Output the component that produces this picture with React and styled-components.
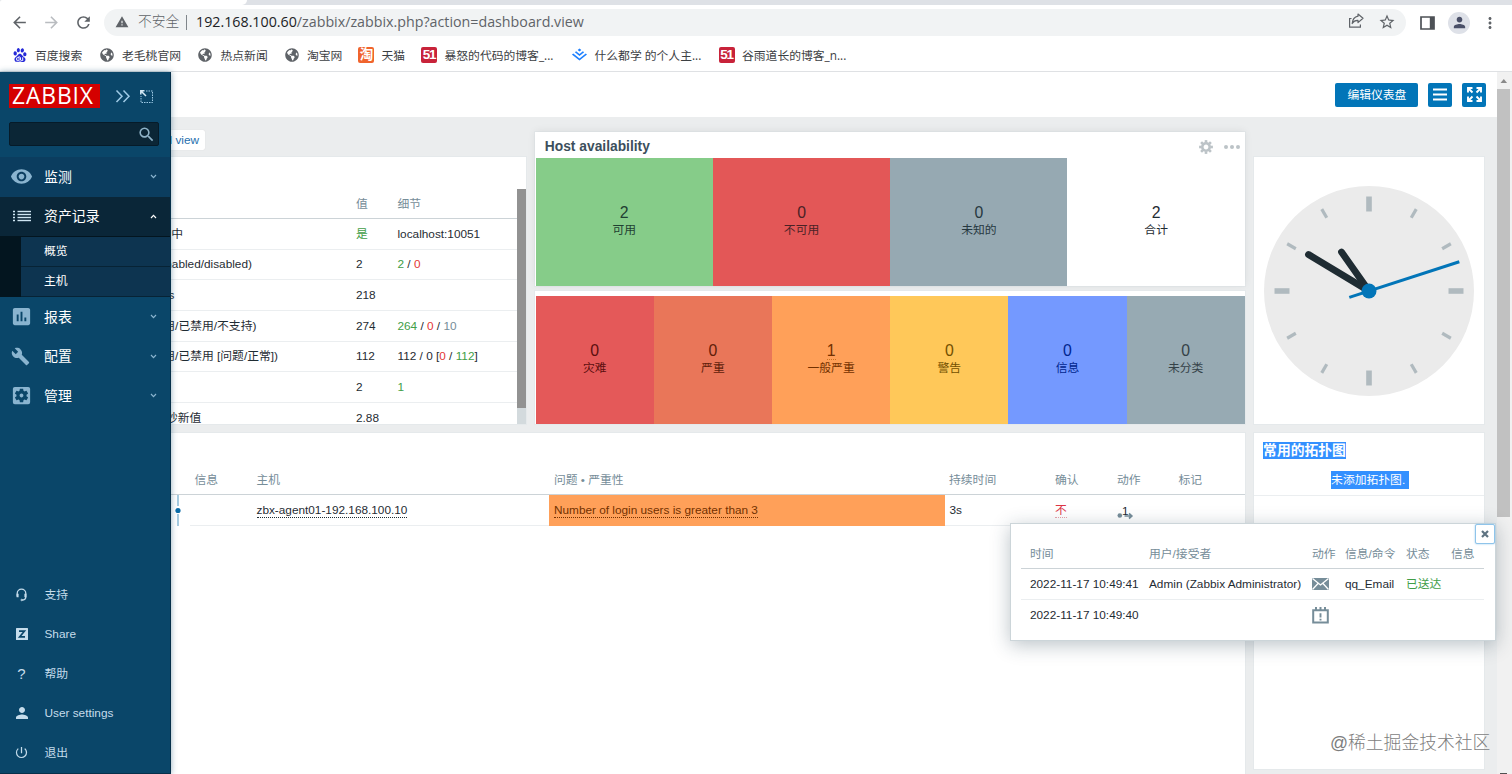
import React from "react";
import styled, { createGlobalStyle } from "styled-components";
import {
  MdArrowBack,
  MdArrowForward,
  MdRefresh,
  MdWarning,
  MdStarBorder,
  MdPerson,
  MdMoreVert,
  MdSearch,
  MdRemoveRedEye,
  MdAssessment,
  MdBuild,
  MdSettingsApplications,
  MdPowerSettingsNew,
} from "react-icons/md";
import { FaGlobeAmericas } from "react-icons/fa";
import { SiBaidu, SiJuejin } from "react-icons/si";

const GlobalStyle = createGlobalStyle`
  * {
    box-sizing: border-box;
  }

  body {
    margin: 0;
    overflow: hidden;
    font-family: "Liberation Sans", "Noto Sans CJK SC", sans-serif;
    font-size: 11.8px;
    line-height: 16px;
    color: #1f2c33;
  }

  svg {
    display: block;
    flex-shrink: 0;
  }
`;

const Screen = styled.div`
  position: relative;
  width: 1512px;
  height: 774px;
  display: flex;
  flex-direction: column;
  overflow: hidden;
  background: #fff;
`;

/* browser */

const TabStrip = styled.div`
  height: 5px;
  background: #dee1e6;
  flex-shrink: 0;
`;

const ActiveTab = styled.div`
  width: 247px;
  height: 5px;
  background: #fff;
  border-radius: 2px 0 5px 0;
`;

const Toolbar = styled.div`
  height: 35px;
  flex-shrink: 0;
  display: flex;
  align-items: center;
  padding: 0 12px 0 10px;
  color: #5f6368;
`;

const NavButtons = styled.div`
  display: flex;
  align-items: center;
  gap: 13px;
  width: 94px;
  padding-bottom: 1px;
`;

const Omnibox = styled.div`
  width: 1302px;
  height: 27px;
  border-radius: 14px;
  background: #f1f3f4;
  display: flex;
  align-items: center;
  padding: 0 10px 1px 11px;
`;

const Insecure = styled.span`
  margin-left: 9px;
  width: 48px;
  font-size: 13.8px;
  font-weight: 300;
  line-height: 20px;
  white-space: nowrap;
`;

const Divider = styled.span`
  width: 1px;
  height: 15px;
  background: #80868b;
  margin-right: 9px;
`;

const Url = styled.span`
  flex: 1;
  font-family: "Open Sans", "Noto Sans", sans-serif;
  font-size: 14.25px;
  line-height: 20px;
  white-space: nowrap;

  b {
    font-weight: 400;
    color: #202124;
  }
`;

const OmniActions = styled.div`
  display: flex;
  gap: 14px;
`;

const BrowserActions = styled.div`
  margin-left: 14px;
  display: flex;
  align-items: center;
`;

const Avatar = styled.div`
  width: 22px;
  height: 22px;
  margin: 0 11px 0 13px;
  border-radius: 50%;
  background: #dee1e8;
  color: #4a5068;
  display: flex;
  align-items: center;
  justify-content: center;
`;

const Bookmarks = styled.div`
  height: 32px;
  flex-shrink: 0;
  border-bottom: 1px solid #dfe1e4;
  display: flex;
  align-items: center;
  padding: 0 0 2px 11px;
`;

const Bookmark = styled.div`
  width: ${(p) => p.$width}px;
  display: flex;
  align-items: center;
  gap: 7px;
  font-family: "Open Sans", "Noto Sans CJK SC", sans-serif;
  font-size: 11.8px;
  white-space: nowrap;
  color: #3c4043;
`;

const BookmarkIcon = styled.div`
  width: 17px;
  height: 17px;
  display: flex;
  align-items: center;
  justify-content: center;
  color: ${(p) => p.$color};
`;

const TextBadge = styled.span`
  width: 16px;
  height: 16px;
  border-radius: 2px;
  background: ${(p) => p.$bg};
  color: #fff;
  font-family: "Liberation Sans", "Noto Sans CJK SC", sans-serif;
  font-size: 13.5px;
  font-weight: 700;
  line-height: 16px;
  letter-spacing: -1.2px;
  text-align: center;
`;

/* page frame */

const Page = styled.div`
  flex: 1;
  min-height: 0;
  display: flex;
`;

const Sidebar = styled.aside`
  position: relative;
  z-index: 2;
  width: 171px;
  /* expanded over the compact rail, so the content starts under it */
  margin-right: -121px;
  flex-shrink: 0;
  display: flex;
  flex-direction: column;
  background: #0a4669;
  border-right: 1px solid #07304a;
  box-shadow: 0 0 6px rgba(10, 70, 105, 0.45);
  color: #fff;
`;

const SidebarHead = styled.div`
  display: flex;
  align-items: center;
  height: 24px;
  margin: 12px 0 14px 9px;
  color: #9fcae6;
`;

const Logo = styled.div`
  width: 91px;
  height: 24px;
  padding-left: 3px;
  background: #d40000;
  color: #fff;
  font-family: "Open Sans", sans-serif;
  font-size: 22.8px;
  line-height: 24px;
  letter-spacing: 0.9px;
  white-space: nowrap;
`;

const SearchBox = styled.div`
  width: 150px;
  height: 24px;
  margin: 0 0 11px 9px;
  border-radius: 2px;
  background: #0b2636;
  border: 1px solid #061b29;
  display: flex;
  align-items: center;
  justify-content: flex-end;
  padding-right: 2px;
  color: #8fb3c8;
`;

const MenuItem = styled.div`
  height: 39.5px;
  display: flex;
  align-items: center;
  padding: 0 13px 0 10px;
  background: ${(p) => p.$bg || "transparent"};
  color: #8ab4cf;
`;

const MenuIcon = styled.span`
  width: 34px;
  display: flex;
  color: ${(p) => (p.$active ? "#cfe6f3" : "inherit")};

  svg {
    margin-left: ${(p) => p.$shift || 0}px;
  }
`;

const MenuLabel = styled.span`
  flex: 1;
  font-size: 13.9px;
  line-height: 20px;
  color: #fff;
`;

const SubMenu = styled.div`
  height: 61px;
  padding: 1px 0 0 21px;
  background: #03151f;
`;

const SubItem = styled.div`
  height: 30px;
  padding: 6px 0 0 23px;
  background: #0d3450;
  border-bottom: 1px solid #072335;
`;

const FootMenu = styled.div`
  margin-top: auto;
  padding-bottom: 1px;
  border-bottom: 1px solid #07304a;
`;

const FootItem = styled.div`
  height: 39.5px;
  display: flex;
  align-items: center;
  padding: 1px 0 0 14.5px;
  gap: 16px;
  color: #c5dceb;
  line-height: 20px;
`;

const FootIcon = styled.span`
  width: 14px;
  display: flex;
  justify-content: center;
  font-size: 15px;
`;

const Main = styled.main`
  flex: 1;
  min-width: 0;
  display: flex;
  flex-direction: column;
  background: #ebedee;
`;

const PageHeader = styled.header`
  height: 45px;
  flex-shrink: 0;
  padding: 0 11px 0 0;
  background: #fff;
  display: flex;
  align-items: center;
  justify-content: flex-end;
  gap: 9.8px;
`;

const Button = styled.button`
  width: ${(p) => p.$width || 24}px;
  height: 24px;
  padding: 0;
  border: 0;
  border-radius: 2px;
  background: #0275b8;
  color: #fff;
  font: inherit;
  display: flex;
  align-items: center;
  justify-content: center;
`;

const Breadcrumb = styled.nav`
  width: 155px;
  margin: 13px 0 7px;
  display: flex;
  justify-content: flex-end;
  color: #1f6fae;
`;

const Crumb = styled.span`
  height: 20px;
  padding: 2px 6px;
  background: #fff;
  border-radius: 2px;
  box-shadow: 0 0 1px rgba(0, 0, 0, 0.15);
  white-space: nowrap;
`;

const TopRow = styled.div`
  display: grid;
  grid-template-columns: 471.5px 710px 230px;
  gap: 9.3px;
  height: 267px;
  padding-left: 4px;
  flex-shrink: 0;
`;

const BottomRow = styled.div`
  display: grid;
  grid-template-columns: 1190.8px 230px;
  gap: 9.3px;
  margin-top: 9px;
  padding-left: 4px;
  flex: 1;
`;

const Widget = styled.section`
  background: #fff;
  box-shadow: 0 0 0 1px #e5e9eb;
  min-width: 0;
`;

/* system information */

const InfoWidget = styled(Widget)`
  padding-top: 32px;
  display: flex;
  overflow: hidden;
`;

const InfoTable = styled.div`
  width: 462.5px;
`;

const InfoRow = styled.div`
  height: ${(p) => (p.$head ? 30 : 30.65)}px;
  display: grid;
  grid-template-columns: 291px 41.5px 1fr;
  align-items: center;
  padding-left: 11px;
  border-bottom: 1px solid ${(p) => (p.$head ? "#ccd3d7" : "#ebeef0")};
  color: ${(p) => (p.$head ? "#768d99" : "inherit")};
  white-space: nowrap;
`;

const InfoScroll = styled.div`
  width: 9px;
  background: #d3dadd;
`;

const InfoThumb = styled.div`
  height: 219px;
  background: #929292;
`;

const Tone = styled.span`
  color: ${(p) => ({ green: "#429e47", red: "#e33734", grey: "#768d99" })[p.$c]};
`;

/* tiles */

const TileColumn = styled.div`
  margin-top: -25px;
  display: flex;
  flex-direction: column;
  gap: 5px;
`;

const HostWidget = styled(Widget)`
  height: 154px;
  box-shadow: 0 -1px 8px rgba(0, 0, 0, 0.07), 0 0 0 1px #e5e9eb;
`;

const SeverityWidget = styled(Widget)`
  padding-top: 5px;
  height: 133px;
`;

const WidgetTitle = styled.div`
  height: 26px;
  display: flex;
  align-items: center;
  padding: 4px 5px 0 10px;
  color: #bcc3c7;

  h4 {
    margin: 0;
    flex: 1;
    font-size: 13.8px;
    color: #3c4f5c;
  }
`;

const Dots = styled.div`
  display: flex;
  gap: 2px;
  margin-left: 10px;

  i {
    width: 4px;
    height: 4px;
    border-radius: 50%;
    background: #bcc3c7;
  }
`;

const Tiles = styled.div`
  display: flex;
  height: 128px;
  padding-left: 0.8px;
`;

const Tile = styled.div`
  flex: 1;
  display: flex;
  flex-direction: column;
  align-items: center;
  justify-content: center;
  padding-bottom: 2px;
  background: ${(p) => p.$bg};
  color: ${(p) => p.$color};

  span {
    height: 18px;
    font-size: 15.8px;
    line-height: 18px;
    border-bottom: 1px ${(p) => (p.$link ? "dotted" : "none")} #c9731f;
  }

  small {
    font-size: 11.8px;
    line-height: 17px;
  }
`;

const ClockWidget = styled(Widget)`
  display: flex;
  align-items: center;
  justify-content: center;
`;

/* problems */

const ProblemWidget = styled(Widget)`
  padding-top: 32px;
`;

const ProblemRow = styled.div`
  height: ${(p) => (p.$head ? 30 : 31)}px;
  display: grid;
  grid-template-columns: 136px 66.5px 292.5px 396px 110px 62px 61.5px 1fr;
  border-bottom: 1px solid ${(p) => (p.$head ? "#ccd3d7" : "transparent")};
  color: ${(p) => (p.$head ? "#768d99" : "inherit")};
  line-height: 30px;
  white-space: nowrap;
`;

const Cell = styled.div`
  min-width: 0;
  padding-left: ${(p) => p.$pad || 0}px;
  background: ${(p) => p.$bg || "transparent"};
  color: ${(p) => p.$color || "inherit"};
  border-bottom: ${(p) => (p.$line ? "1px solid #ebeef0" : "0")};
`;

const Dotted = styled.span`
  display: inline-block;
  line-height: 13px;
  border-bottom: 1px dotted ${(p) => p.$line || "currentColor"};
`;

const TimelineCell = styled.div`
  padding-left: 120px;
`;

/* maps */

const MapWidget = styled(Widget)`
  margin-bottom: 5px;
  padding-top: 9px;
`;

const MapTitle = styled.h4`
  width: 83px;
  height: 17px;
  margin: 0 0 12px 9px;
  background: #3390ff;
  color: #fff;
  font-size: 13.8px;
  line-height: 17px;
  white-space: nowrap;
`;

const MapEmpty = styled.div`
  height: 25px;
  display: flex;
  justify-content: center;
  padding-left: 2px;
  border-bottom: 1px solid #ebeef0;

  span {
    width: 78px;
    height: 18px;
    line-height: 18px;
    background: #3390ff;
    color: #fff;
    white-space: nowrap;
  }
`;

/* overlays */

const Popup = styled.div`
  position: absolute;
  z-index: 3;
  left: 1010px;
  top: 523px;
  width: 486px;
  height: 118px;
  padding: 15px 11px 0 10px;
  background: #fff;
  border: 1px solid #ccd5d9;
  box-shadow: 0 4px 18px rgba(31, 56, 73, 0.3);
`;

const PopupRow = styled.div`
  height: ${(p) => (p.$head ? 30 : 31)}px;
  display: grid;
  grid-template-columns: 119px 163px 33px 61px 45px 1fr;
  align-items: center;
  padding-left: 9px;
  border-bottom: 1px solid
    ${(p) => (p.$head ? "#ccd3d7" : p.$last ? "transparent" : "#ebeef0")};
  color: ${(p) => (p.$head ? "#768d99" : "inherit")};
  white-space: nowrap;
`;

const CloseButton = styled.button`
  position: absolute;
  top: 0;
  right: 0;
  width: 20px;
  height: 20px;
  padding: 0;
  border: 1px solid #8fc4ea;
  border-radius: 2px;
  box-shadow: 0 0 2px #8fc4ea;
  background: #fff;
  display: flex;
  align-items: center;
  justify-content: center;
`;

const Scrollbar = styled.div`
  width: 15px;
  flex-shrink: 0;
  display: flex;
  flex-direction: column;
  background: #f1f1f1;
`;

const ScrollThumb = styled.div`
  width: 13px;
  height: 428px;
  background: #c1c1c1;
`;

const ScrollEnd = styled.div`
  width: 7px;
  height: 1px;
  margin: auto 0 0 3px;
  background: #505050;
`;

const Watermark = styled.div`
  position: absolute;
  z-index: 4;
  left: 1330px;
  top: 731px;
  font-size: 17.8px;
  font-weight: 300;
  line-height: 24px;
  white-space: nowrap;
  color: #7d7d7d;
`;

const Chevron = ({ up }) => (
  <svg width="7" height="5" viewBox="0 0 7 5" fill="none">
    <path
      d={up ? "M1 4l2.5-2.6L6 4" : "M1 1l2.5 2.6L6 1"}
      stroke={up ? "#fff" : "#8ab4cf"}
      strokeWidth="1.2"
    />
  </svg>
);

const ListIcon = () => (
  <svg width="20" height="13" viewBox="0 0 20 13" stroke="currentColor">
    {[1.5, 4.5, 7.5, 10.5].map((y) => (
      <g key={y}>
        <path d={`M1 ${y}h2`} strokeWidth="1.4" />
        <path d={`M5.5 ${y}h13.5`} strokeWidth="1.4" />
      </g>
    ))}
  </svg>
);

const GearIcon = () => (
  <svg width="16" height="16" viewBox="-8 -8 16 16" stroke="currentColor">
    <circle r="3.7" fill="none" strokeWidth="2.6" />
    {[0, 45, 90, 135, 180, 225, 270, 315].map((deg) => (
      <path key={deg} d="M0-4.500V-6.900" strokeWidth="2.600" transform={`rotate(${deg})`} />
    ))}
  </svg>
);

const HeadsetIcon = () => (
  <svg width="13" height="14" viewBox="0 0 13 14" fill="none" stroke="currentColor">
    <path d="M2.200 8.500V5.500a4.300 4.300 0 0 1 8.600 0v3.500c0 1.900-1.300 3-3.800 3" strokeWidth="1.300" />
    <path d="M2.600 5.800v3.400M10.400 5.800v3.400" strokeWidth="2" />
    <circle cx="6.600" cy="12" r="0.700" />
  </svg>
);

const ShareIcon = () => (
  <svg width="16" height="16" viewBox="0 0 16 16" fill="none" stroke="#5f6368">
    <path d="M3.5 5.5H1.6v8.6h10.8v-2.6" strokeWidth="1.2" />
    <path
      d="M10 3.2V1l5 4.3-5 4.3V7.4c-2.700-.1-4.500.9-5.800 3.100.3-3.700 2.300-6.600 5.800-7.300z"
      strokeWidth="1.2"
      strokeLinejoin="round"
    />
  </svg>
);

const ShareZ = () => (
  <svg width="12" height="12" viewBox="0 0 12 12">
    <rect width="12" height="12" rx="0.5" fill="#c5dceb" />
    <path d="M3 3.100h5.500L3.600 8.900H9" fill="none" stroke="#0a4669" strokeWidth="1.6" />
  </svg>
);

const clockTicks = [0, 30, 60, 90, 120, 150, 180, 210, 240, 270, 300, 330];

const Clock = () => (
  <svg width="210" height="210" viewBox="-105 -105 210 210">
    <circle r="105" fill="#ebebeb" />
    {clockTicks.map((deg) => {
      const big = deg % 90 === 0;
      return (
        <path
          key={deg}
          d={big ? "M0-94.500V-79.500" : "M0-94.500V-84.500"}
          transform={`rotate(${deg})`}
          stroke="#b0babf"
          strokeWidth={big ? 5.6 : 3.2}
        />
      );
    })}
    <g stroke="#1f2c33" strokeWidth="6.8" strokeLinecap="round">
      <path d="M0 0L-27.500-39" />
      <path d="M0 0L-60.500-36.500" />
    </g>
    <path d="M-19.700 6.400L90.300-29.300" stroke="#0275b8" strokeWidth="3" />
    <circle r="7.500" fill="#0275b8" />
  </svg>
);

const bookmarks = [
  { label: "百度搜索", width: 87, color: "#2529d8", icon: <SiBaidu size={14} /> },
  { label: "老毛桃官网", width: 98.5, color: "#5f6368", icon: <FaGlobeAmericas size={14} /> },
  { label: "热点新闻", width: 86.5, color: "#5f6368", icon: <FaGlobeAmericas size={14} /> },
  { label: "淘宝网", width: 74.5, color: "#5f6368", icon: <FaGlobeAmericas size={14} /> },
  { label: "天猫", width: 63, icon: <TextBadge $bg="#f0642d">淘</TextBadge> },
  { label: "暴怒的代码的博客_...", width: 150, icon: <TextBadge $bg="#c8233a">51</TextBadge> },
  { label: "什么都学 的个人主...", width: 147.5, color: "#1e80ff", icon: <SiJuejin size={15} /> },
  { label: "谷雨道长的博客_n...", width: 140, icon: <TextBadge $bg="#c8233a">51</TextBadge> },
];

const footItems = [
  { label: "支持", icon: <HeadsetIcon /> },
  { label: "Share", icon: <ShareZ /> },
  { label: "帮助", icon: "?" },
  { label: "User settings", icon: <MdPerson size={18} /> },
  { label: "退出", icon: <MdPowerSettingsNew size={15} /> },
];

const infoRows = [
  ["Zabbix服务器端运行中", <Tone $c="green">是</Tone>, "localhost:10051"],
  [
    "Number of hosts (enabled/disabled)",
    "2",
    <>
      <Tone $c="green">2</Tone> / <Tone $c="red">0</Tone>
    </>,
  ],
  ["Number of templates", "218", ""],
  [
    "监控项的数量(已启用/已禁用/不支持)",
    "274",
    <>
      <Tone $c="green">264</Tone> / <Tone $c="red">0</Tone> / <Tone $c="grey">10</Tone>
    </>,
  ],
  [
    "触发器的数量(已启用/已禁用 [问题/正常])",
    "112",
    <>
      112 / 0 [<Tone $c="red">0</Tone> / <Tone $c="green">112</Tone>]
    </>,
  ],
  ["用户数(线上)", "2", <Tone $c="green">1</Tone>],
  ["要求的主机性能, 每秒新值", "2.88", ""],
];

const hostTiles = [
  { value: 2, label: "可用", bg: "#86cc89", color: "#1f4032" },
  { value: 0, label: "不可用", bg: "#e35757", color: "#4a2226" },
  { value: 0, label: "未知的", bg: "#96a9b2", color: "#263840" },
  { value: 2, label: "合计", bg: "#fff", color: "#1f2c33" },
];

const severityTiles = [
  { value: 0, label: "灾难", bg: "#e45959", color: "#5c0f0f" },
  { value: 0, label: "严重", bg: "#e97659", color: "#5f1d0a" },
  { value: 1, label: "一般严重", bg: "#ffa059", color: "#733100", link: true },
  { value: 0, label: "警告", bg: "#ffc859", color: "#735000" },
  { value: 0, label: "信息", bg: "#7499ff", color: "#00268e" },
  { value: 0, label: "未分类", bg: "#97aab3", color: "#354248" },
];

const BrowserChrome = () => (
  <>
    <TabStrip>
      <ActiveTab />
    </TabStrip>
    <Toolbar>
      <NavButtons>
        <MdArrowBack size={19} />
        <MdArrowForward size={19} color="#b9bcc0" />
        <MdRefresh size={19} />
      </NavButtons>
      <Omnibox>
        <MdWarning size={14} />
        <Insecure>不安全</Insecure>
        <Divider />
        <Url>
          <b>192.168.100.60</b>/zabbix/zabbix.php?action=dashboard.view
        </Url>
        <OmniActions>
          <ShareIcon />
          <MdStarBorder size={18} />
        </OmniActions>
      </Omnibox>
      <BrowserActions>
        <svg width="15" height="14" viewBox="0 0 15 14">
          <path d="M1 1h13v12H1z" fill="none" stroke="#4d5156" strokeWidth="1.700" />
          <path d="M9.800 1H14v12H9.800z" fill="#4d5156" />
        </svg>
        <Avatar>
          <MdPerson size={17} />
        </Avatar>
        <MdMoreVert size={18} />
      </BrowserActions>
    </Toolbar>
    <Bookmarks>
      {bookmarks.map((b) => (
        <Bookmark key={b.label} $width={b.width}>
          <BookmarkIcon $color={b.color}>{b.icon}</BookmarkIcon>
          {b.label}
        </Bookmark>
      ))}
    </Bookmarks>
  </>
);

const SideNav = () => (
  <Sidebar>
    <SidebarHead>
      <Logo>ZABBIX</Logo>
      <svg width="54" height="24" viewBox="0 0 54 24" fill="none" stroke="currentColor">
        <path d="M16.500 6.500l5.500 5.700-5.500 5.700M23.500 6.500l5.500 5.700-5.500 5.700" strokeWidth="1.500" />
        <path d="M46 7h6.500v11.500H41V12" strokeDasharray="1.500 1" />
        <path d="M46 12l-5-5M40.800 10.500V6.800h3.700" stroke="#d5e9f5" strokeWidth="1.500" />
      </svg>
    </SidebarHead>
    <SearchBox>
      <MdSearch size={19} />
    </SearchBox>
    <MenuItem $bg="#0b3d5f">
      <MenuIcon>
        <MdRemoveRedEye size={23} />
      </MenuIcon>
      <MenuLabel>监测</MenuLabel>
      <Chevron />
    </MenuItem>
    <MenuItem $bg="#0a2638">
      <MenuIcon $active $shift={1.5}>
        <ListIcon />
      </MenuIcon>
      <MenuLabel>资产记录</MenuLabel>
      <Chevron up />
    </MenuItem>
    <SubMenu>
      <SubItem>概览</SubItem>
      <SubItem>主机</SubItem>
    </SubMenu>
    <MenuItem>
      <MenuIcon>
        <MdAssessment size={23} />
      </MenuIcon>
      <MenuLabel>报表</MenuLabel>
      <Chevron />
    </MenuItem>
    <MenuItem>
      <MenuIcon $shift={1}>
        <MdBuild size={19} />
      </MenuIcon>
      <MenuLabel>配置</MenuLabel>
      <Chevron />
    </MenuItem>
    <MenuItem>
      <MenuIcon>
        <MdSettingsApplications size={23} />
      </MenuIcon>
      <MenuLabel>管理</MenuLabel>
      <Chevron />
    </MenuItem>
    <FootMenu>
      {footItems.map((item) => (
        <FootItem key={item.label}>
          <FootIcon>{item.icon}</FootIcon>
          {item.label}
        </FootItem>
      ))}
    </FootMenu>
  </Sidebar>
);

const SystemInfo = () => (
  <InfoWidget>
    <InfoTable>
      <InfoRow $head>
        <span>参数</span>
        <span>值</span>
        <span>细节</span>
      </InfoRow>
      {infoRows.map(([name, value, details]) => (
        <InfoRow key={name}>
          <span>{name}</span>
          <span>{value}</span>
          <span>{details}</span>
        </InfoRow>
      ))}
    </InfoTable>
    <InfoScroll>
      <InfoThumb />
    </InfoScroll>
  </InfoWidget>
);

const Problems = () => (
  <ProblemWidget>
    <ProblemRow $head>
      <span />
      <Cell $pad={4.5}>信息</Cell>
      <Cell>主机</Cell>
      <Cell $pad={5}>问题 • 严重性</Cell>
      <Cell $pad={4}>持续时间</Cell>
      <Cell>确认</Cell>
      <Cell>动作</Cell>
      <Cell>标记</Cell>
    </ProblemRow>
    <ProblemRow>
      <TimelineCell>
        <svg width="8" height="31" viewBox="0 0 8 31">
          <path d="M4 0v11M4 19v12" stroke="#a6cbe0" strokeWidth="2" />
          <circle cx="4" cy="15.500" r="2.600" fill="#0a6ca8" />
        </svg>
      </TimelineCell>
      <Cell $line />
      <Cell $line>
        <Dotted>zbx-agent01-192.168.100.10</Dotted>
      </Cell>
      <Cell $pad={5} $bg="#ffa059" $color="#733100">
        <Dotted>Number of login users is greater than 3</Dotted>
      </Cell>
      <Cell $line $pad={4.5}>
        3s
      </Cell>
      <Cell $line $color="#dc3545">
        <Dotted $line="#e9a3aa">不</Dotted>
      </Cell>
      <Cell $line>
        <svg width="18" height="30" viewBox="0 0 18 30">
          <text x="5" y="20" fontSize="11.800" fill="#1f2c33">
            1
          </text>
          <circle cx="2.800" cy="20.500" r="2.300" fill="#768d99" />
          <path d="M7.500 21h7M12 18.500l2.800 2.500-2.800 2.500" fill="none" stroke="#768d99" strokeWidth="1.700" />
        </svg>
      </Cell>
      <Cell $line />
    </ProblemRow>
  </ProblemWidget>
);

const ActionPopup = () => (
  <Popup>
    <CloseButton>
      <svg width="8" height="8" viewBox="0 0 8 8">
        <path d="M1 1l6 6M7 1L1 7" stroke="#5f7482" strokeWidth="2.200" />
      </svg>
    </CloseButton>
    <PopupRow $head>
      <span>时间</span>
      <span>用户/接受者</span>
      <span>动作</span>
      <span>信息/命令</span>
      <span>状态</span>
      <span>信息</span>
    </PopupRow>
    <PopupRow>
      <span>2022-11-17 10:49:41</span>
      <span>Admin (Zabbix Administrator)</span>
      <svg width="17" height="12" viewBox="0 0 17 12">
        <rect width="17" height="12" fill="#768d99" />
        <path
          d="M0.500 0.500l8 6.500 8-6.500M0.500 11.500L6 5.500M16.500 11.500L11 5.500"
          fill="none"
          stroke="#fff"
          strokeWidth="1.300"
        />
      </svg>
      <span>qq_Email</span>
      <Tone $c="green">已送达</Tone>
    </PopupRow>
    <PopupRow $last>
      <span>2022-11-17 10:49:40</span>
      <span />
      <svg width="17" height="17" viewBox="0 0 17 17" fill="none" stroke="#768d99">
        <path d="M1.200 3.200h14.600v12.300H1.200z" strokeWidth="2" />
        <path d="M4 0v4M8.500 0v4M13 0v4" strokeWidth="2" />
        <path d="M8.500 6.200v4.300M8.500 11.700v1.800" strokeWidth="1.900" />
      </svg>
    </PopupRow>
  </Popup>
);

const App = () => {
  return (
    <Screen>
      <GlobalStyle />
      <BrowserChrome />
      <Page>
        <SideNav />
        <Main>
          <PageHeader>
            <Button $width={83}>编辑仪表盘</Button>
            <Button>
              <svg width="14" height="13" viewBox="0 0 14 13">
                <path d="M0 1.500h14M0 6.500h14M0 11.500h14" stroke="#fff" strokeWidth="1.900" />
              </svg>
            </Button>
            <Button>
              <svg width="15" height="15" viewBox="0 0 15 15" fill="none" stroke="#fff" strokeWidth="1.900">
                <path d="M1 5.500V1h4.500M9.500 1H14v4.500M14 9.500V14H9.500M5.500 14H1V9.500" />
                <path d="M1 1l4.500 4.500M14 1L9.500 5.500M14 14L9.500 9.500M1 14l4.500-4.500" />
              </svg>
            </Button>
          </PageHeader>
          <Breadcrumb>
            <Crumb>Global view</Crumb>
          </Breadcrumb>
          <TopRow>
            <SystemInfo />
            <TileColumn>
              <HostWidget>
                <WidgetTitle>
                  <h4>Host availability</h4>
                  <GearIcon />
                  <Dots>
                    <i />
                    <i />
                    <i />
                  </Dots>
                </WidgetTitle>
                <Tiles>
                  {hostTiles.map((t) => (
                    <Tile key={t.label} $bg={t.bg} $color={t.color}>
                      <span>{t.value}</span>
                      <small>{t.label}</small>
                    </Tile>
                  ))}
                </Tiles>
              </HostWidget>
              <SeverityWidget>
                <Tiles>
                  {severityTiles.map((t) => (
                    <Tile key={t.label} $bg={t.bg} $color={t.color} $link={t.link}>
                      <span>{t.value}</span>
                      <small>{t.label}</small>
                    </Tile>
                  ))}
                </Tiles>
              </SeverityWidget>
            </TileColumn>
            <ClockWidget>
              <Clock />
            </ClockWidget>
          </TopRow>
          <BottomRow>
            <Problems />
            <MapWidget>
              <MapTitle>常用的拓扑图</MapTitle>
              <MapEmpty>
                <span>未添加拓扑图.</span>
              </MapEmpty>
            </MapWidget>
          </BottomRow>
        </Main>
        <Scrollbar>
          <svg width="13" height="17" viewBox="0 0 13 17">
            <path d="M3.500 11l3.300-4 3.300 4z" fill="#8a8a8a" />
          </svg>
          <ScrollThumb />
          <ScrollEnd />
        </Scrollbar>
      </Page>
      <ActionPopup />
      <Watermark>@稀土掘金技术社区</Watermark>
    </Screen>
  );
};

export default App;
